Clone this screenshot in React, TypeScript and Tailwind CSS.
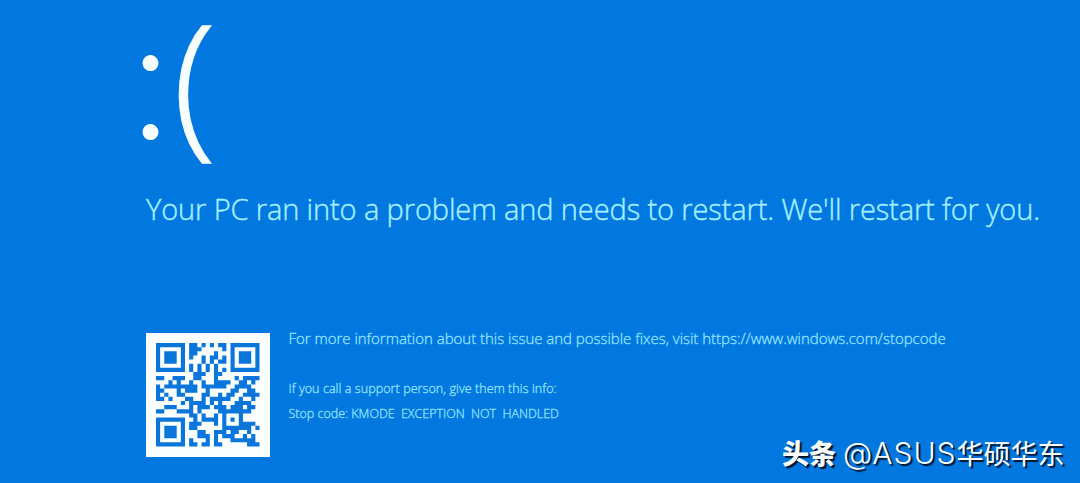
import React from "react";

const STOP_URL = "https://www.windows.com/stopcode";
const SIZE = 25;

// multiply in GF(256)
function mul(a: number, b: number) {
  let z = 0;
  for (let i = 7; i >= 0; i--) {
    z = (z << 1) ^ ((z >>> 7) * 0x11d);
    z ^= ((b >>> i) & 1) * a;
  }
  return z;
}

function errorCodewords(data: number[], degree: number) {
  const gen = new Array(degree).fill(0);
  gen[degree - 1] = 1;
  let root = 1;
  for (let i = 0; i < degree; i++) {
    for (let j = 0; j < degree; j++) {
      gen[j] = mul(gen[j], root);
      if (j + 1 < degree) gen[j] ^= gen[j + 1];
    }
    root = mul(root, 2);
  }
  const rem = new Array(degree).fill(0);
  for (const b of data) {
    const factor = b ^ rem.shift();
    rem.push(0);
    gen.forEach((c, i) => (rem[i] ^= mul(c, factor)));
  }
  return rem;
}

// version 2, level L, mask 4: 34 data codewords and 10 for error correction
function makeQr(text: string) {
  const bits: number[] = [];
  const put = (v: number, n: number) => {
    for (let i = n - 1; i >= 0; i--) bits.push((v >>> i) & 1);
  };
  put(4, 4);
  put(text.length, 8);
  for (const ch of text) put(ch.charCodeAt(0), 8);
  put(0, 4);
  const data: number[] = [];
  for (let i = 0; i < bits.length; i += 8) data.push(parseInt(bits.slice(i, i + 8).join(""), 2));
  const all = [...data, ...errorCodewords(data, 10)];

  const grid: (boolean | null)[][] = Array.from({ length: SIZE }, () => new Array(SIZE).fill(null));
  const set = (x: number, y: number, v: boolean) => {
    if (x >= 0 && y >= 0 && x < SIZE && y < SIZE) grid[y][x] = v;
  };
  for (let i = 0; i < SIZE; i++) {
    set(6, i, i % 2 === 0);
    set(i, 6, i % 2 === 0);
  }
  for (const [cx, cy] of [[3, 3], [SIZE - 4, 3], [3, SIZE - 4]]) {
    for (let dy = -4; dy <= 4; dy++)
      for (let dx = -4; dx <= 4; dx++) {
        const d = Math.max(Math.abs(dx), Math.abs(dy));
        set(cx + dx, cy + dy, d !== 2 && d !== 4);
      }
  }
  for (let dy = -2; dy <= 2; dy++)
    for (let dx = -2; dx <= 2; dx++) set(18 + dx, 18 + dy, Math.max(Math.abs(dx), Math.abs(dy)) !== 1);

  // format bits, both copies
  const bit = (i: number) => ((0b110011000101111 >>> i) & 1) === 1;
  for (let i = 0; i <= 5; i++) set(8, i, bit(i));
  set(8, 7, bit(6));
  set(8, 8, bit(7));
  set(7, 8, bit(8));
  for (let i = 9; i < 15; i++) set(14 - i, 8, bit(i));
  for (let i = 0; i < 8; i++) set(SIZE - 1 - i, 8, bit(i));
  for (let i = 8; i < 15; i++) set(8, SIZE - 15 + i, bit(i));
  set(8, SIZE - 8, true);

  let n = 0;
  for (let right = SIZE - 1; right >= 1; right -= 2) {
    if (right === 6) right = 5;
    for (let v = 0; v < SIZE; v++)
      for (let j = 0; j < 2; j++) {
        const x = right - j;
        const y = ((right + 1) & 2) === 0 ? SIZE - 1 - v : v;
        if (grid[y][x] !== null) continue;
        const on = n < all.length * 8 && ((all[n >>> 3] >>> (7 - (n & 7))) & 1) === 1;
        grid[y][x] = on !== ((Math.floor(x / 3) + Math.floor(y / 2)) % 2 === 0);
        n++;
      }
  }
  return grid;
}

function QrCode() {
  let d = "";
  makeQr(STOP_URL).forEach((row, y) =>
    row.forEach((on, x) => {
      if (on) d += `M${x} ${y}h1v1h-1z`;
    }),
  );
  return (
    <div className="h-[124px] w-[124px] shrink-0 bg-[#fbffff] pt-[10px] pl-[10px]">
      <svg viewBox="0 0 25 25" className="h-[103.5px] w-[103.5px]" aria-label="QR code">
        <path d={d} fill="#0a76dc" />
      </svg>
    </div>
  );
}

export default function App() {
  return (
    <main className="h-[483px] w-[1080px] overflow-hidden bg-[#0078e0] font-['Open_Sans','Noto_Sans',sans-serif] font-light text-[#a5f0ff]">
      {/* SAD FACE */}
      <div className="flex h-[189px] items-start pl-[130px] text-[#f8ffff]">
        <span className="w-[43px] font-['Lato',sans-serif] text-[171px] leading-[146px]">:</span>
        <span className="text-[157px] leading-[155px] [-webkit-text-stroke:1.5px_#f8ffff]">(</span>
      </div>

      <h1 className="h-[144px] pl-[146px] text-[29px] leading-[40px] font-light tracking-[-0.12px] whitespace-nowrap [-webkit-text-stroke:0.4px]">
        Your PC ran into a problem and needs to restart. We'll restart for you.
      </h1>

      {/* DETAILS */}
      <div className="flex h-[103px] items-start pl-[146px]">
        <QrCode />
        <div className="-mt-[5px] ml-[18.5px] whitespace-nowrap text-[#96e4fc] [-webkit-text-stroke:0.3px]">
          <p className="text-[15px] leading-[20px] tracking-[-0.02px]">
            For more information about this issue and possible fixes, visit {STOP_URL}
          </p>
          <p className="mt-[31px] text-[12.5px] leading-[20px] tracking-[0.08px]">
            If you call a support person, give them this info:
          </p>
          <p className="mt-[5px] text-[12.5px] leading-[20px]">
            Stop code: <span className="[word-spacing:3px]">KMODE EXCEPTION NOT HANDLED</span>
          </p>
        </div>
      </div>

      {/* WATERMARK */}
      <div className="-mt-px flex items-baseline gap-[7px] pl-[782px] text-[27px] leading-[36px] whitespace-nowrap text-white [text-shadow:2px_2px_1px_#00152e]">
        <span className="font-['Noto_Sans_CJK_SC',sans-serif] font-black">头条</span>
        <span className="font-['Noto_Sans_CJK_SC',sans-serif] font-normal">
          <span className="font-['Inter',sans-serif] text-[30px] font-light tracking-[1px]">@ASUS</span>华硕华东
        </span>
      </div>
    </main>
  );
}
